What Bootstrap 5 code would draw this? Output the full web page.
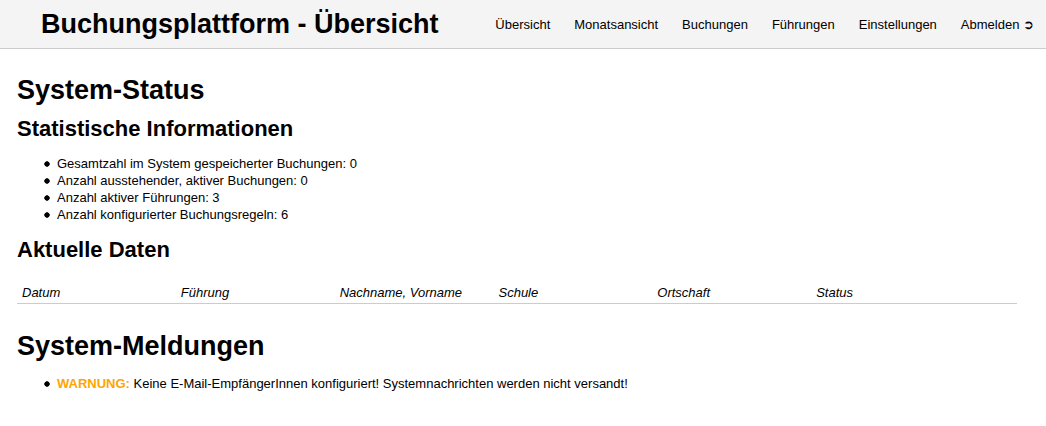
<!DOCTYPE html>
<html lang="de">
<head>
<meta charset="utf-8">
<meta name="viewport" content="width=device-width, initial-scale=1">
<title>Buchungsplattform - Übersicht</title>
<link href="https://cdn.jsdelivr.net/npm/bootstrap@5.3.0/dist/css/bootstrap.min.css" rel="stylesheet">
<style>
body{font-family:"Liberation Sans",Arial,sans-serif;font-size:13px;line-height:17px;color:#000;background:#fff}
h1,h2,h3{font-weight:700;margin:0}
.site-header{background:#f4f4f4;border-bottom:1px solid #ccc;padding:0 12px 0 41px}
.site-header h1{font-size:27px;line-height:48px}
.site-nav{gap:24px}
.site-nav a{color:#000;text-decoration:none}
main{padding:24px 29px 24px 17px}
h2{font-size:27px;line-height:34px}
h3{font-size:22px;line-height:26px;margin:9px 0 13px}
main ul{padding-left:27px;margin:12px 0 14px;list-style:none}
main li{padding-left:13px;background:radial-gradient(circle closest-side,#000 80%,transparent) 0 6px/6px 6px no-repeat}
.data-table{table-layout:fixed;width:100%;margin:19px 0 25px}
.data-table th{font-weight:400;font-style:italic;padding:2px 5px;border-bottom:1px solid #ccc}
.data-table .actions{width:47px}
.warn{color:#ffa500}
</style>
</head>
<body>
<header class="site-header d-flex flex-wrap align-items-center justify-content-between">
<h1>Buchungsplattform - Übersicht</h1>
<nav class="site-nav d-flex flex-wrap" aria-label="Hauptmenü">
<a href="#">Übersicht</a><a href="#">Monatsansicht</a><a href="#">Buchungen</a><a href="#">Führungen</a><a href="#">Einstellungen</a><a href="#">Abmelden ➲</a>
</nav>
</header>
<main>
<h2>System-Status</h2>
<h3>Statistische Informationen</h3>
<ul>
<li>Gesamtzahl im System gespeicherter Buchungen: 0</li>
<li>Anzahl ausstehender, aktiver Buchungen: 0</li>
<li>Anzahl aktiver Führungen: 3</li>
<li>Anzahl konfigurierter Buchungsregeln: 6</li>
</ul>
<h3>Aktuelle Daten</h3>
<table class="data-table"><thead><tr><th>Datum</th><th>Führung</th><th>Nachname, Vorname</th><th>Schule</th><th>Ortschaft</th><th>Status</th><th class="actions"></th></tr></thead></table>
<h2>System-Meldungen</h2>
<ul><li><strong class="warn">WARNUNG:</strong> Keine E-Mail-EmpfängerInnen konfiguriert! Systemnachrichten werden nicht versandt!</li></ul>
</main>
<script src="https://cdn.jsdelivr.net/npm/bootstrap@5.3.0/dist/js/bootstrap.bundle.min.js"></script>
</body>
</html>
